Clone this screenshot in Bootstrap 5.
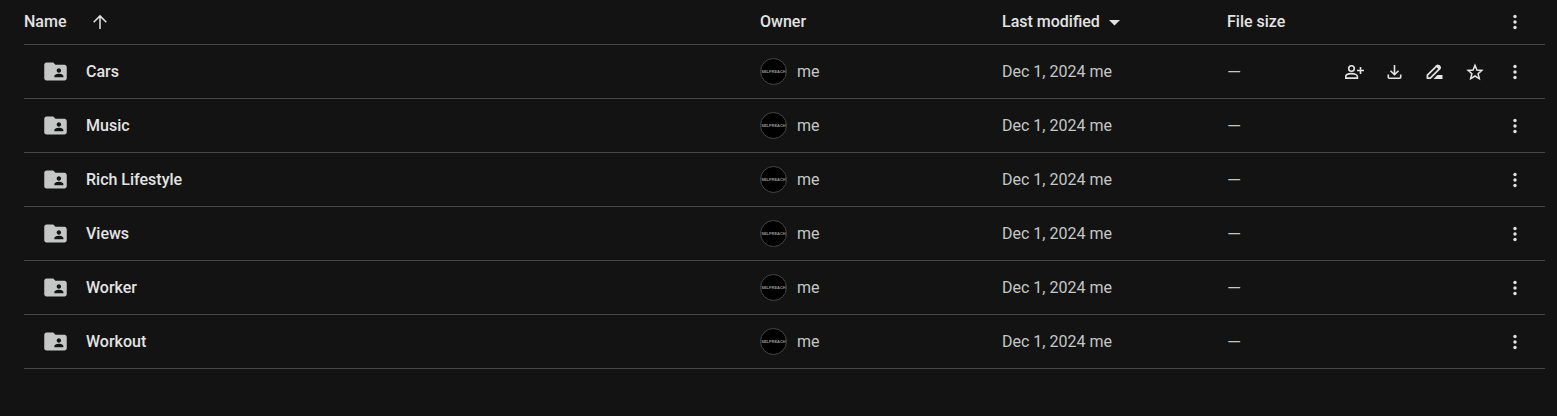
<!DOCTYPE html>
<html lang="en" data-bs-theme="dark">
<head>
<meta charset="utf-8">
<meta name="viewport" content="width=device-width, initial-scale=1">
<title>Folders</title>
<link rel="stylesheet" href="https://cdn.jsdelivr.net/npm/bootstrap@5.3.0/dist/css/bootstrap.min.css">
<style>
  body { background: #131314; color: #e3e3e3; font: 500 16px/24px Roboto, "Liberation Sans", sans-serif; }
  .file-list { padding: 0 12px 0 24px; }
  .files { table-layout: fixed; --bs-table-bg: transparent; --bs-table-color: #e3e3e3; border-color: #444746; }
  .files > :not(caption) > * > * { height: 54px; padding: 2px 0 0; vertical-align: middle; }
  .files > thead > tr > th { height: 44px; padding-top: 1px; font-weight: 500; }
  .col-owner { width: 242px; }
  .col-modified { width: 225px; }
  .col-size { width: 108px; }
  .col-tools { width: 210px; }
  .files td { font-weight: 400; color: #c4c7c5; }
  .files .file-name { font-weight: 500; }
  .files .file-size { font-size: 18px; }
  .file-name a { color: #e3e3e3; }
  .folder { width: 27px; height: 27px; margin: 0 17px 2px 18px; }
  .avatar { width: 27px; height: 27px; margin: 0 10px 2px 0; }
  .avatar text { font: 700 4px "Liberation Sans", sans-serif; }
  .tool { width: 20px; height: 20px; padding: 0; border: 0; background: none; color: #e3e3e3; display: flex; }
  .tool svg, .sort svg { width: 20px; height: 20px; fill: currentColor; }
  .tools { gap: 20px; padding-right: 20px; }
  .sort { padding: 0; border: 0; background: none; color: inherit; font-weight: 500; display: inline-flex; align-items: center; }
</style>
</head>
<body>
<svg class="d-none">
  <symbol id="i-folder" viewBox="0 0 24 24"><path fill-rule="evenodd" d="M20 6h-8l-2-2H4c-1.100 0-1.990.9-1.990 2L2 18c0 1.100.9 2 2 2h16c1.100 0 2-.9 2-2V8c0-1.100-.9-2-2-2zm-5 3c1.100 0 2 .9 2 2s-.9 2-2 2-2-.9-2-2 .9-2 2-2zm4 8h-8v-1c0-1.330 2.670-2 4-2s4 .67 4 2v1z"/></symbol>
  <symbol id="i-more" viewBox="0 0 20 20"><circle cx="10" cy="4.500" r="1.700"/><circle cx="10" cy="10" r="1.700"/><circle cx="10" cy="15.500" r="1.700"/></symbol>
  <symbol id="i-share" viewBox="0 0 20 20"><g fill="none" stroke="currentColor" stroke-width="1.600"><circle cx="6.500" cy="6.500" r="2.800"/><path d="M.8 16.100v-1.600c0-1.700 2.700-2.900 5.700-2.900s5.900 1.200 5.900 2.900v1.600zM15.500 5v7M12 8.500h7"/></g></symbol>
  <symbol id="i-download" viewBox="0 0 20 20"><path fill="none" stroke="currentColor" stroke-width="1.600" d="M9.500 3v9.500M5.500 8.700l4 4 4-4M3.300 12.500v2.700q0 1 1 1h10.400q1 0 1-1v-2.700"/></symbol>
  <symbol id="i-rename" viewBox="0 0 20 20"><path fill="none" stroke="currentColor" stroke-width="1.700" stroke-linejoin="round" d="M2.400 16.200v-3L11.800 3.800q.9-.8 1.800 0l1.100 1.100q.8.900 0 1.800L5.300 16.200z"/><path d="M11.800 3.100h2.500l1.400 1.500-.3 2.400-1.100 1-4-3.900zM12.500 13h5v4h-9z"/></symbol>
  <symbol id="i-star" viewBox="0 0 20 20"><path fill="none" stroke="currentColor" stroke-width="1.500" d="M10 3.300l1.900 4.700 5 .4-3.800 3.300 1.200 4.900-4.300-2.600-4.300 2.600 1.200-4.900-3.800-3.300 5-.4z"/></symbol>
</svg>
<main class="container-fluid file-list">
<table class="table files mb-0">
  <colgroup><col><col class="col-owner"><col class="col-modified"><col class="col-size"><col class="col-tools"></colgroup>
  <thead><tr>
    <th scope="col"><button class="sort" type="button">Name<svg class="ms-4" viewBox="0 0 20 20" aria-hidden="true"><path fill="none" stroke="currentColor" stroke-width="1.500" d="M10 17V4M3.700 10.200L10 3.900l6.300 6.300"/></svg></button></th>
    <th scope="col">Owner</th>
    <th scope="col"><button class="sort" type="button">Last modified<svg class="ms-1" viewBox="0 0 20 20" aria-hidden="true"><path d="M5 8h11l-5.500 5.500z"/></svg></button></th>
    <th scope="col">File size</th>
    <th scope="col"><div class="tools d-flex justify-content-end"><button class="tool" type="button" aria-label="More options"><svg><use href="#i-more"/></svg></button></div></th>
  </tr></thead>
  <tbody id="rows"></tbody>
</table>
</main>
<script src="https://cdn.jsdelivr.net/npm/bootstrap@5.3.0/dist/js/bootstrap.bundle.min.js"></script>
<script>
  const tool = (id, label) => `<button class="tool" type="button" aria-label="${label}"><svg><use href="#i-${id}"/></svg></button>`;
  const hoverTools = tool('share', 'Share') + tool('download', 'Download') + tool('rename', 'Rename') + tool('star', 'Add to starred');
  document.getElementById('rows').innerHTML = ['Cars', 'Music', 'Rich Lifestyle', 'Views', 'Worker', 'Workout'].map((name, i) => `
    <tr>
      <td class="file-name"><div class="d-flex align-items-center"><svg class="folder" fill="#c4c7c5" aria-hidden="true"><use href="#i-folder"/></svg><a class="text-decoration-none" href="#">${name}</a></div></td>
      <td><div class="d-flex align-items-center"><svg class="avatar" viewBox="0 0 27 27"><circle cx="13.500" cy="13.500" r="13" fill="#000" stroke="#444746"/><text x="13.500" y="15" text-anchor="middle" fill="#999">SELFREACH</text></svg>me</div></td>
      <td>Dec 1, 2024 me</td>
      <td class="file-size">—</td>
      <td><div class="tools d-flex justify-content-end">${i === 0 ? hoverTools : ''}${tool('more', 'More actions')}</div></td>
    </tr>`).join('');
</script>
</body>
</html>
